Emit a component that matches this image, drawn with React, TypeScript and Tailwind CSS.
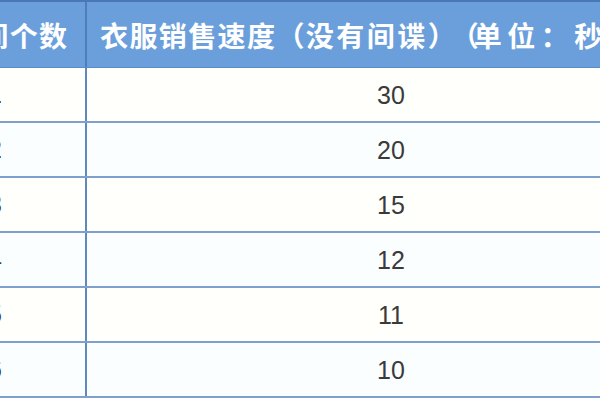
import React from "react";

const rows = [
  ["1", "30"],
  ["2", "20"],
  ["3", "15"],
  ["4", "12"],
  ["5", "11"],
  ["6", "10"],
];

export default function App() {
  return (
    <div className="w-[600px] h-[400px] overflow-hidden bg-white">
      <div className="ml-[-95px] w-[790px] border-t-2 border-[#4a78b4]">
        <div className="flex h-[66px] bg-[#6b9fdb] text-white font-bold text-[28px] whitespace-nowrap [font-family:'Noto_Sans_CJK_SC',sans-serif] [text-spacing-trim:space-all] border-b border-[#5d8cc8]">
          <div className="w-[182px] shrink-0 flex items-center justify-center border-r-2 border-[#4f7db8] tracking-[1.4px]">
            试衣间个数
          </div>
          <div className="flex-1 flex items-center pl-[13px] overflow-hidden">
            <span className="tracking-[1.4px]">衣服销售速度（</span>
            <span className="tracking-[2.5px]">没有间谍</span>
            <span className="tracking-[-5px]">）（</span>
            <span className="tracking-[5.5px]">单位：秒）</span>
          </div>
        </div>
        {rows.map(([a, b], i) => (
          <div
            key={i}
            className={`flex h-[55px] border-b-2 border-[#7f9fcc] text-[25px] text-[#3a3a3a] [font-family:'Liberation_Sans',sans-serif] ${
              i % 2 === 0 ? "bg-[#fffffb]" : "bg-[#fbfeff]"
            }`}
          >
            <div className="w-[182px] shrink-0 flex items-center justify-center border-r-2 border-[#5f89bd]">
              {a}
            </div>
            <div className="w-[608px] shrink-0 flex items-center justify-center pt-[2px]">
              {b}
            </div>
          </div>
        ))}
      </div>
    </div>
  );
}
